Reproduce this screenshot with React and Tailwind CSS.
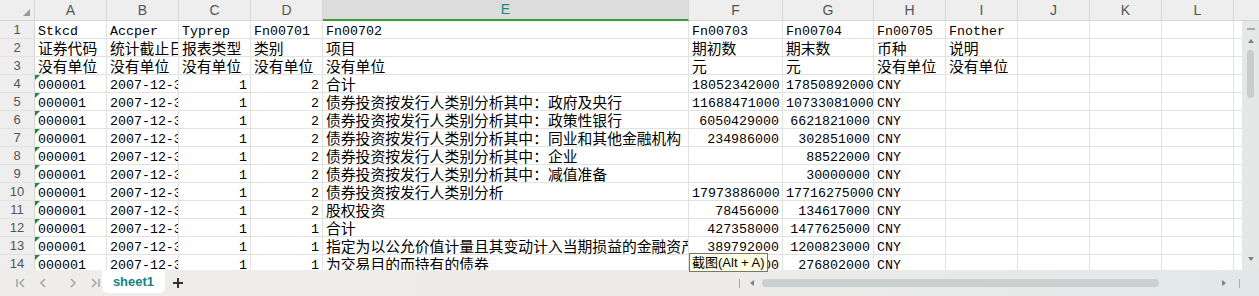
import React from "react";

const cols = [
  { k: "A", w: "w-[72px]" },
  { k: "B", w: "w-[72px]" },
  { k: "C", w: "w-[72px]" },
  { k: "D", w: "w-[72px]" },
  { k: "E", w: "w-[366px]" },
  { k: "F", w: "w-[94px]" },
  { k: "G", w: "w-[91px]" },
  { k: "H", w: "w-[72px]" },
  { k: "I", w: "w-[72px]" },
  { k: "J", w: "w-[72px]" },
  { k: "K", w: "w-[72px]" },
  { k: "L", w: "w-[72px]" },
];

const pre = "债券投资按发行人类别分析其中：";

const rows = [
  ["Stkcd", "Accper", "Typrep", "Fn00701", "Fn00702", "Fn00703", "Fn00704", "Fn00705", "Fnother"],
  ["证券代码", "统计截止日期", "报表类型", "类别", "项目", "期初数", "期末数", "币种", "说明"],
  ["没有单位", "没有单位", "没有单位", "没有单位", "没有单位", "元", "元", "没有单位", "没有单位"],
  ["000001", "2007-12-31", "1", "2", "合计", "18052342000", "17850892000", "CNY", ""],
  ["000001", "2007-12-31", "1", "2", pre + "政府及央行", "11688471000", "10733081000", "CNY", ""],
  ["000001", "2007-12-31", "1", "2", pre + "政策性银行", "6050429000", "6621821000", "CNY", ""],
  ["000001", "2007-12-31", "1", "2", pre + "同业和其他金融机构", "234986000", "302851000", "CNY", ""],
  ["000001", "2007-12-31", "1", "2", pre + "企业", "", "88522000", "CNY", ""],
  ["000001", "2007-12-31", "1", "2", pre + "减值准备", "", "30000000", "CNY", ""],
  ["000001", "2007-12-31", "1", "2", "债券投资按发行人类别分析", "17973886000", "17716275000", "CNY", ""],
  ["000001", "2007-12-31", "1", "2", "股权投资", "78456000", "134617000", "CNY", ""],
  ["000001", "2007-12-31", "1", "1", "合计", "427358000", "1477625000", "CNY", ""],
  ["000001", "2007-12-31", "1", "1", "指定为以公允价值计量且其变动计入当期损益的金融资产", "389792000", "1200823000", "CNY", ""],
  ["000001", "2007-12-31", "1", "1", "为交易目的而持有的债券", "196431000", "276802000", "CNY", ""],
];

const latin = "font-['Liberation_Mono',monospace] text-[13.3px] pt-[2px]";
const cjk = "font-['Noto_Sans_CJK_SC',sans-serif] text-[14.8px]";
const headFont = "font-['Liberation_Sans',Arial,sans-serif]";

function Cell({ col, value, rowIdx, ci }) {
  const isLatin = /^[\x00-\x7f]*$/.test(value);
  const right = rowIdx >= 3 && ci > 0 && /^\d+$/.test(value);
  return (
    <div
      className={`${col.w} relative h-full shrink-0 overflow-hidden whitespace-nowrap border-r border-[#e2e2e2] px-[3px] leading-[17px] text-black ${
        right ? "text-right" : "text-left"
      } ${isLatin ? latin : cjk}`}
    >
      {ci === 0 && rowIdx >= 3 && (
        <span className="absolute left-0 top-0 h-0 w-0 border-t-[5px] border-r-[5px] border-t-[#1e8a35] border-r-transparent" />
      )}
      {value}
    </div>
  );
}

export default function App() {
  return (
    <div className="relative w-[1259px] h-[296px] overflow-hidden bg-white flex flex-col select-none">
      {/* column header */}
      <div className={`flex h-[21px] shrink-0 bg-[#eeeeee] border-b border-[#d6d6d6] ${headFont}`}>
        <div className="w-[35px] shrink-0 border-r border-[#d6d6d6] relative">
          <span className="absolute right-[4px] bottom-[4px] h-0 w-0 border-b-[7px] border-l-[7px] border-b-[#9a9a9a] border-l-transparent" />
        </div>
        {cols.map((c) => (
          <div
            key={c.k}
            className={`${c.w} shrink-0 border-r border-[#d6d6d6] flex items-center justify-center text-[14px] ${
              c.k === "E" ? "bg-[#dcdcdc] text-[#1a8a7c] border-b-2 border-b-[#3d9b35] -mb-px" : "text-[#555555]"
            }`}
          >
            {c.k}
          </div>
        ))}
        <div className="flex-1" />
      </div>

      {/* body */}
      <div className="flex h-[249px] shrink-0">
        <div className="w-[1242px] shrink-0 overflow-hidden">
          {rows.map((r, ri) => (
            <div key={ri} className="flex h-[18px] border-b border-[#e2e2e2]">
              <div className={`w-[35px] shrink-0 bg-[#eeeeee] border-r border-[#d6d6d6] flex items-center justify-center text-[13px] text-[#555555] ${headFont}`}>
                {ri + 1}
              </div>
              {cols.map((c, ci) => (
                <Cell key={c.k} col={c} value={r[ci] || ""} rowIdx={ri} ci={ci} />
              ))}
            </div>
          ))}
        </div>
        {/* vertical scrollbar */}
        <div className="w-[17px] shrink-0 bg-[#e4e9e8] flex flex-col items-center pt-[7px] pb-[8px]">
          <div className="w-[8px] h-[2px] bg-[#a9adad]" />
          <svg width="8" height="6" viewBox="0 0 8 6" className="mt-[8px]">
            <path d="M4 1 L7 5 L1 5 Z" fill="#7d8282" />
          </svg>
          <div className="mt-[6px] w-[7px] h-[48px] rounded-full bg-[#c9cdcd]" />
          <div className="flex-1" />
          <svg width="8" height="6" viewBox="0 0 8 6">
            <path d="M1 1 L7 1 L4 5 Z" fill="#7d8282" />
          </svg>
        </div>
      </div>

      {/* bottom bar */}
      <div className="flex h-[26px] shrink-0 items-start bg-gradient-to-r from-[#efedeb] via-[#eeecea] to-[#e2e8e8]">
        <div className="w-[102px] shrink-0 h-[26px] flex items-center pl-[15px] gap-[10px]">
          <svg width="12" height="12" viewBox="0 0 12 12">
            <path d="M2 2 V10 M9 2 L5 6 L9 10" stroke="#a3a8a8" strokeWidth="1.6" fill="none" />
          </svg>
          <svg width="12" height="12" viewBox="0 0 12 12">
            <path d="M8 2 L4 6 L8 10" stroke="#a3a8a8" strokeWidth="1.6" fill="none" />
          </svg>
          <svg width="12" height="12" viewBox="0 0 12 12" className="ml-[8px]">
            <path d="M4 2 L8 6 L4 10" stroke="#a3a8a8" strokeWidth="1.6" fill="none" />
          </svg>
          <svg width="12" height="12" viewBox="0 0 12 12">
            <path d="M3 2 L7 6 L3 10 M10 2 V10" stroke="#a3a8a8" strokeWidth="1.6" fill="none" />
          </svg>
        </div>
        <div className={`w-[63px] h-[23px] shrink-0 bg-white rounded-b-[6px] flex items-center justify-center text-[13px] font-bold text-[#16837c] ${headFont}`}>
          sheet1
        </div>
        <div className="h-[26px] flex items-center pl-[7px]">
          <svg width="12" height="12" viewBox="0 0 12 12">
            <path d="M6 1 V11 M1 6 H11" stroke="#333333" strokeWidth="2" fill="none" />
          </svg>
        </div>
        <div className="flex-1" />
        <div className="w-[520px] h-[26px] shrink-0 flex items-center">
          <div className="w-px h-[9px] bg-[#a9adad]" />
          <svg width="6" height="8" viewBox="0 0 6 8" className="ml-[9px]">
            <path d="M5 1 L5 7 L1 4 Z" fill="#7d8282" />
          </svg>
          <div className="ml-[7px] w-[397px] h-[8px] rounded-full bg-[#cbcfcf]" />
          <div className="flex-1" />
          <svg width="6" height="8" viewBox="0 0 6 8">
            <path d="M1 1 L1 7 L5 4 Z" fill="#7d8282" />
          </svg>
          <div className="ml-[12px] mr-[19px] w-px h-[9px] bg-[#a9adad]" />
        </div>
      </div>

      {/* tooltip */}
      <div className="absolute left-[689px] top-[253px] h-[19px] px-[2px] bg-[#ffffe1] border border-[#767676] flex items-center text-[13px] text-black font-['Liberation_Sans','Noto_Sans_CJK_SC',sans-serif] leading-none">
        截图(Alt + A)
      </div>
    </div>
  );
}
